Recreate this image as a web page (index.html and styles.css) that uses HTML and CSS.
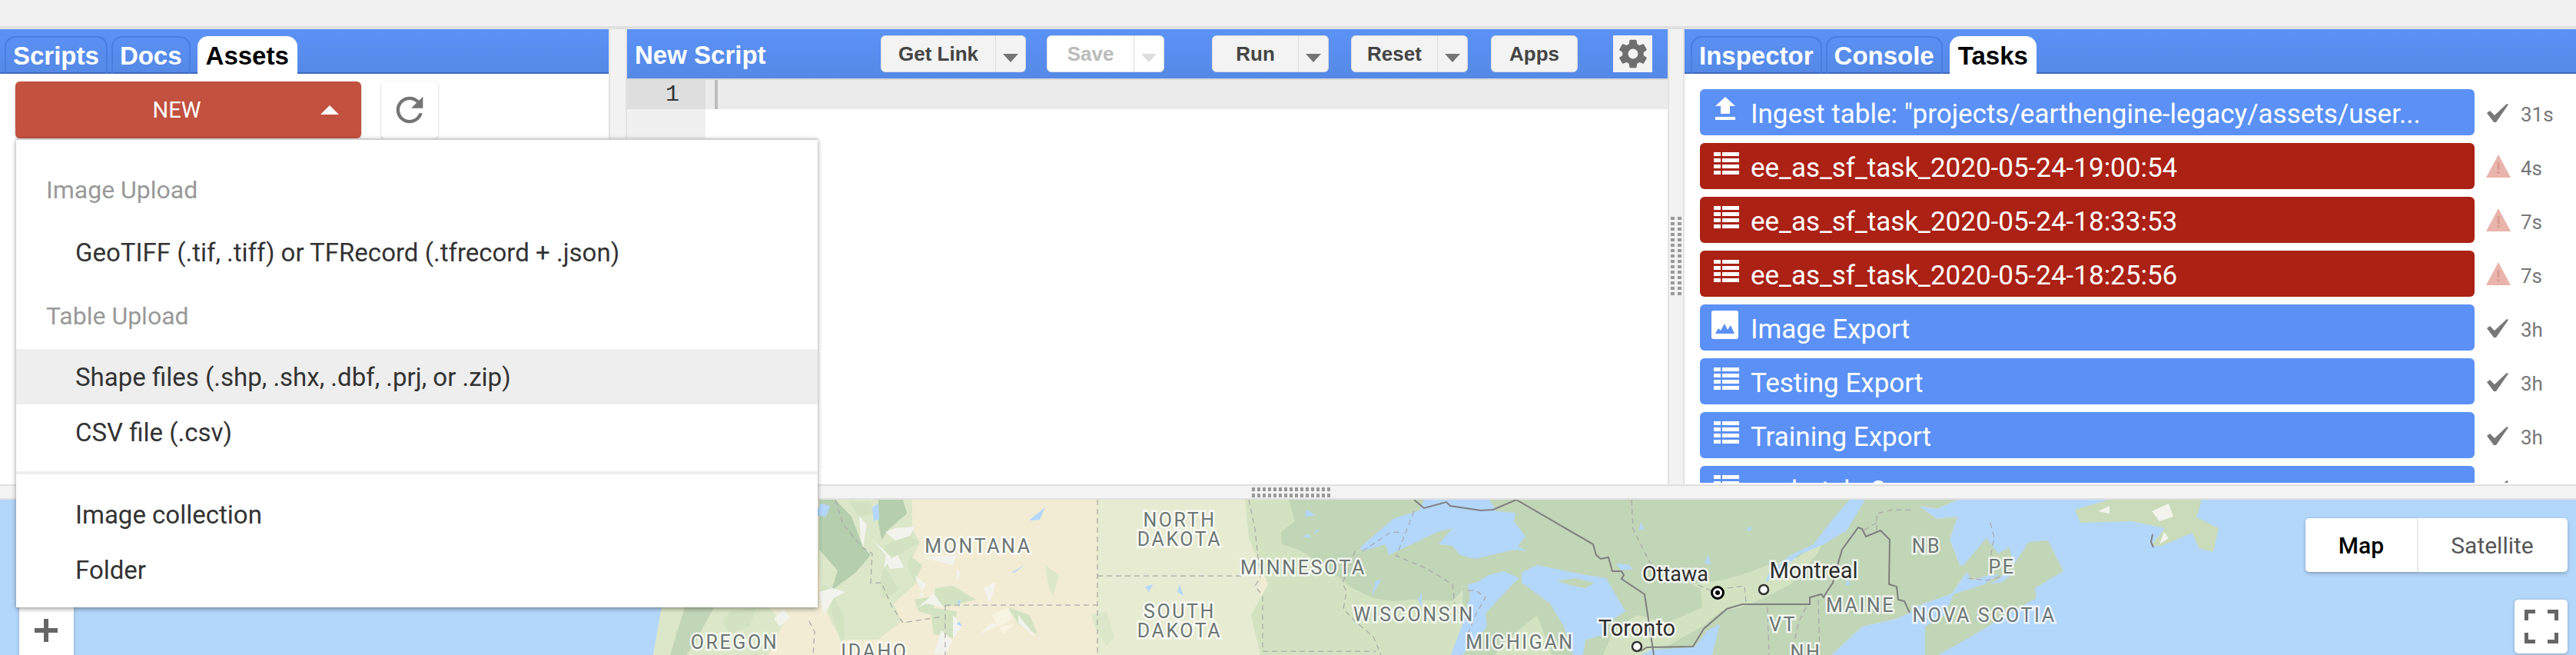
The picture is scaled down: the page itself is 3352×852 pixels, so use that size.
FILE: index.html
```html
<!DOCTYPE html>
<html lang="en">
<head>
<meta charset="utf-8">
<title>Earth Engine Code Editor</title>
<link rel="stylesheet" href="styles.css">
</head>
<body>
<svg class="defs" width="0" height="0" aria-hidden="true">
  <symbol id="i-table" viewBox="0 0 33 29"><path d="M0 0h9v5H0zM11 0h22v5H11zM0 8h9v5H0zM11 8h22v5H11zM0 16h9v5H0zM11 16h22v5H11zM0 24h9v5H0zM11 24h22v5H11z"/></symbol>
  <symbol id="i-upload" viewBox="0 0 26 31"><path d="M13 0 26 12H19V22H7V12H0zM0 26H26V30H0z"/></symbol>
  <symbol id="i-image" viewBox="0 0 35 37"><path fill-rule="evenodd" d="M3 0H32a3 3 0 0 1 3 3V34a3 3 0 0 1-3 3H3a3 3 0 0 1-3-3V3a3 3 0 0 1 3-3zM5 30H30L25 19 21 25 17 17 12 26 9 23z"/></symbol>
  <symbol id="i-check" viewBox="0 0 28 24"><path d="M0 12 4 9 10 15 26 0 28 1 12 24H9z"/></symbol>
  <symbol id="i-warn" viewBox="0 0 32 30"><path d="M16 0 32 30H0z"/><path class="warn-mark" d="M14.5 10h3v10h-3zM14.5 22h3v3h-3z"/></symbol>
</svg>

<div class="topbar"></div>

<main class="panels">
  <section class="panel left">
    <div class="tabbar">
      <span class="tab">Scripts</span>
      <span class="tab">Docs</span>
      <span class="tab active">Assets</span>
    </div>
    <div class="asset-tools">
      <div class="new-btn"><span class="new-label">NEW</span><span class="tri-up"></span></div>
      <div class="refresh">
        <svg viewBox="0 0 24 24" width="52" height="52"><path d="M17.65 6.35C16.2 4.9 14.21 4 12 4c-4.42 0-7.99 3.58-7.99 8s3.57 8 7.99 8c3.73 0 6.84-2.55 7.73-6h-2.08c-.82 2.33-3.04 4-5.65 4-3.31 0-6-2.69-6-6s2.69-6 6-6c1.66 0 3.14.69 4.22 1.78L13 11h7V4l-2.35 2.35z"/></svg>
      </div>
    </div>
  </section>

  <div class="gutter"></div>

  <section class="panel middle">
    <div class="toolbar">
      <span class="title">New Script</span>
      <div class="group"><span class="btn w-getlink">Get Link</span><span class="drop"></span></div>
      <div class="group gap-save disabled"><span class="btn w-save">Save</span><span class="drop"></span></div>
      <div class="group gap-run"><span class="btn w-run">Run</span><span class="drop"></span></div>
      <div class="group gap-reset"><span class="btn w-run">Reset</span><span class="drop"></span></div>
      <div class="group gap-apps"><span class="btn solo w-run">Apps</span></div>
      <div class="gear">
        <svg viewBox="0 0 24 24" width="44" height="44"><path d="M19.43 12.98c.04-.32.07-.64.07-.98s-.03-.66-.07-.98l2.11-1.65c.19-.15.24-.42.12-.64l-2-3.46c-.12-.22-.39-.3-.61-.22l-2.49 1c-.52-.4-1.08-.73-1.69-.98l-.38-2.65C14.46 2.18 14.25 2 14 2h-4c-.25 0-.46.18-.49.42l-.38 2.65c-.61.25-1.17.59-1.69.98l-2.49-1c-.23-.09-.49 0-.61.22l-2 3.46c-.13.22-.07.49.12.64l2.11 1.65c-.04.32-.07.65-.07.98s.03.66.07.98l-2.11 1.65c-.19.15-.24.42-.12.64l2 3.46c.12.22.39.3.61.22l2.49-1c.52.4 1.08.73 1.69.98l.38 2.65c.03.24.24.42.49.42h4c.25 0 .46-.18.49-.42l.38-2.65c.61-.25 1.17-.59 1.69-.98l2.49 1c.23.09.49 0 .61-.22l2-3.46c.12-.22.07-.49-.12-.64l-2.11-1.65zM12 15.5c-1.93 0-3.5-1.57-3.5-3.5s1.57-3.5 3.5-3.5 3.5 1.57 3.5 3.5-1.57 3.5-3.5 3.5z"/></svg>
      </div>
    </div>
    <div class="editor">
      <div class="line-row"><span class="line-no">1</span><span class="cursor"></span></div>
      <div class="editor-rest"><span class="gutter-fill"></span></div>
    </div>
  </section>

  <div class="gutter v-grip"><span class="grip-v"></span></div>

  <section class="panel right">
    <div class="tabbar">
      <span class="tab">Inspector</span>
      <span class="tab">Console</span>
      <span class="tab active">Tasks</span>
    </div>
    <div class="tasks">
      <div class="task"><div class="task-bar blue"><svg class="ic ic-upload"><use href="#i-upload"/></svg><span class="task-name">Ingest table: "projects/earthengine-legacy/assets/user...</span></div><div class="status"><svg class="st-check"><use href="#i-check"/></svg><span class="time">31s</span></div></div>
      <div class="task"><div class="task-bar red"><svg class="ic ic-table"><use href="#i-table"/></svg><span class="task-name">ee_as_sf_task_2020-05-24-19:00:54</span></div><div class="status"><svg class="st-warn"><use href="#i-warn"/></svg><span class="time">4s</span></div></div>
      <div class="task"><div class="task-bar red"><svg class="ic ic-table"><use href="#i-table"/></svg><span class="task-name">ee_as_sf_task_2020-05-24-18:33:53</span></div><div class="status"><svg class="st-warn"><use href="#i-warn"/></svg><span class="time">7s</span></div></div>
      <div class="task"><div class="task-bar red"><svg class="ic ic-table"><use href="#i-table"/></svg><span class="task-name">ee_as_sf_task_2020-05-24-18:25:56</span></div><div class="status"><svg class="st-warn"><use href="#i-warn"/></svg><span class="time">7s</span></div></div>
      <div class="task"><div class="task-bar blue"><svg class="ic ic-image"><use href="#i-image"/></svg><span class="task-name">Image Export</span></div><div class="status"><svg class="st-check"><use href="#i-check"/></svg><span class="time">3h</span></div></div>
      <div class="task"><div class="task-bar blue"><svg class="ic ic-table"><use href="#i-table"/></svg><span class="task-name">Testing Export</span></div><div class="status"><svg class="st-check"><use href="#i-check"/></svg><span class="time">3h</span></div></div>
      <div class="task"><div class="task-bar blue"><svg class="ic ic-table"><use href="#i-table"/></svg><span class="task-name">Training Export</span></div><div class="status"><svg class="st-check"><use href="#i-check"/></svg><span class="time">3h</span></div></div>
      <div class="task"><div class="task-bar blue"><svg class="ic ic-table"><use href="#i-table"/></svg><span class="task-name">ee_batch_2</span></div><div class="status"><svg class="st-check"><use href="#i-check"/></svg><span class="time">3h</span></div></div>
    </div>
  </section>
</main>

<div class="splitter"><span class="grip-h"></span></div>

<section class="map">
  <svg class="map-art" viewBox="0 650 3352 202" width="3352" height="202" aria-label="Map of the northern United States and south-eastern Canada">
    <!-- land base -->
    <path class="tan" d="M861 790 850 852H2383L2423 815 2467 805 2485 797 2490 790 2540 772 2563 738 2550 735 2537 702 2547 672 2520 675 2497 658 2520 662 2547 650H850Z"/>
    <path class="pale" d="M1428 650H1640V852H1428Z"/>
    <path class="mid" d="M1620 650H1690L1900 760 1920 852H1640L1628 800 1650 760 1625 700Z"/>
    <path class="dark" d="M1677 650 1685 678 1667 692 1668 708 1690 715 1707 725 1747 755 1760 765 1787 778 1813 782 1837 780 1890 782 1903 768 1905 852H2383L2423 815 2467 805 2485 797 2490 790 2540 772 2563 738 2550 735 2537 702 2547 672 2520 675 2497 658 2520 662 2547 650Z"/>
    <!-- Pacific coast ranges -->
    <path class="light" d="M861 790H1000L1020 810 1000 852H850Z"/>
    <path class="dark" d="M891 790H929L918 810 905 835 893 852H872Z"/>
    <path class="mid" d="M950 795 985 790 975 815 950 825 940 810Z"/>
    <path class="white" d="M1007 805 1020 792 1028 803 1015 815Z"/>
    <!-- southern Ontario and St Lawrence valley -->
    <path class="mid" d="M2086 852 2100 820 2130 800 2170 810 2215 790 2213 765 2200 760 2240 755 2275 745 2300 735 2340 725 2375 700 2365 720 2330 760 2295 778 2265 790 2240 795 2215 815 2170 840 2135 852Z"/>
    <path class="mid" d="M1945 852 1970 825 2000 800 2020 852Z"/>
    <!-- Rocky Mountains -->
    <path class="light" d="M1087 650H1187V688L1197 705 1183 735 1193 758 1177 772 1163 785 1173 808 1143 832 1097 832 1083 812 1070 778 1066 745V650Z"/>
    <path class="mid" d="M1105 653 1133 652 1137 668 1117 672ZM1151 710 1180 695 1197 705 1165 725 1155 740ZM1183 722 1200 735 1190 758 1182 740ZM1150 735 1170 768 1150 778 1145 760ZM1217 765 1240 762 1270 780 1230 790 1215 782ZM1210 790 1245 795 1240 830 1215 825ZM1312 790 1340 800 1350 825 1325 812ZM1190 780 1220 775 1212 800 1195 795Z"/>
    <path class="forest" d="M1066 650H1087L1108 672 1123 712 1133 722 1113 745 1082 768 1090 742 1066 715ZM1143 650H1175L1180 668 1157 688 1147 702 1143 680Z"/>
    <path class="mid" d="M1094 835 1080 790 1066 770 1072 760 1083 770 1097 800 1100 830Z"/>
    <path class="white" d="M1152 692 1165 687 1190 685 1184 697 1165 703ZM1118 672 1128 682 1123 712 1120 700ZM1133 700 1160 725 1150 740 1153 722ZM1153 730 1168 722 1176 738 1158 740ZM1066 770 1083 765 1100 770 1085 778 1072 800ZM1200 725 1245 722 1240 735ZM1245 740 1250 745 1245 755ZM1190 748 1205 760 1195 778 1202 775ZM1195 790 1215 772 1228 790 1205 785ZM1280 765 1296 757 1288 785ZM1325 800 1345 825 1348 830 1325 810ZM1240 800 1252 815 1240 830ZM1225 820 1240 833 1230 852 1215 850ZM1290 810 1300 813 1275 825Z"/>
    <path class="cream" d="M1290 800 1312 790 1317 805 1300 815ZM1300 815 1320 812 1305 825Z"/>
    <path class="light" d="M1420 800 1440 795 1450 830 1440 840 1425 815ZM1360 735 1378 748 1370 775 1365 765Z"/>
    <!-- lakes -->
    <path class="water" d="M1770 712 1813 675 1847 664 1853 650H1938L1947 665 1972 667 1970 678 1985 698 1975 710 1987 717 1970 715 1920 727 1900 722 1890 710 1872 708 1890 687 1870 692 1837 708 1807 722 1803 708 1773 717Z"/>
    <path class="water" d="M1957 743 1977 752 1970 758 1933 798 1935 815 1903 852H1888L1903 812 1913 775 1910 760 1923 757 1937 748Z"/>
    <path class="water" d="M1980 745 2000 735 2063 748 2090 752 2100 770 2115 795 2095 808 2080 805 2090 825 2063 832 2060 852H2047L2035 815 2017 785 1980 758Z"/>
    <path class="dark" d="M2025 755 2050 752 2075 758 2063 765 2045 762Z"/>
    <path class="water" d="M2135 852 2150 845 2205 842 2222 820 2238 812 2228 852Z"/>
    <path class="water" d="M2407 650H2427L2403 690 2373 708 2340 722 2320 740 2297 758 2302 745 2330 722 2360 708 2385 675Z"/>
    <path class="water" d="M2103 733 2120 735 2125 740 2110 742ZM2223 721 2226 735 2218 732ZM2135 680 2140 688 2132 690ZM2272 690 2278 684 2279 690ZM1060 670 1068 655 1080 658 1075 672ZM1135 660 1143 655 1144 675 1137 678ZM1340 676 1360 660 1353 676 1342 677ZM1316 745 1333 735 1320 745ZM1250 780 1248 790 1246 782ZM1248 808 1252 815 1245 812ZM1490 763 1500 760 1495 770ZM1535 760 1540 775 1532 770ZM1700 663 1712 670 1698 672ZM1702 695 1707 700 1695 698ZM1712 690 1718 688 1710 695ZM1790 755 1797 755 1785 775ZM1845 780 1850 770 1850 790ZM2403 752 2408 760 2402 762Z"/>
    <path class="pale-land" d="M2700 663 2744 650H2865L2858 673 2887 687 2880 718 2861 713 2853 693 2813 710 2799 710 2817 687 2773 678 2707 680Z"/>
    <path class="white" d="M2730 665 2745 658 2745 668ZM2800 665 2822 655 2828 672 2810 678ZM2816 692 2822 700 2810 708Z"/>
    <path class="land-ns" d="M2505 852 2505 815 2530 800 2542 773 2582 760 2620 735 2640 705 2665 703 2685 743 2648 765 2650 778 2610 800 2570 825 2522 852Z"/>
    <path class="land-ns" d="M2555 735 2585 700 2600 720 2615 712 2622 745 2590 748 2565 755Z"/>
    <path class="water" d="M2590 760 2612 745 2620 745 2605 757Z"/>
    <!-- state and province lines -->
    <g class="state">
      <path d="M1428 650V852M1428 749H1615M1230 787H1428M1230 787V852"/>
      <path d="M1087 650 1097 682 1122 712 1135 720 1133 758 1147 758 1160 788 1175 810 1227 802"/>
      <path d="M1053 808 1060 822 1058 852"/>
      <path d="M1625 650 1633 688 1640 752 1633 762 1643 775 1643 847H1790"/>
      <path d="M1763 717 1757 735 1747 758 1752 770 1748 792 1763 808 1787 828 1797 852"/>
      <path d="M1773 717 1810 692 1826 693M1840 665 1817 723 1857 740 1890 760 1893 785"/>
      <path d="M1910 768 1920 768 1933 777 1920 800 1910 825"/>
      <path d="M2123 650 2125 688 2147 732 2203 758 2226 768M2248 765 2270 762 2272 785"/>
      <path d="M2300 790 2302 852M2366 780 2368 852M2350 790 2340 810 2332 852"/>
      <path d="M2442 690 2442 668 2463 663 2490 663M2442 680 2425 690"/>
      <path d="M2590 680 2595 700 2590 725M2560 752 2585 755 2605 750"/>
    </g>
    <path class="border" d="M1840 650 1853 661 1882 653 1887 658 1927 664 1943 663 1973 650 2073 708 2077 722 2083 727 2093 725 2098 743 2110 743 2113 748 2110 753 2140 773 2151 845 2152 852M2135 847 2143 842 2203 841 2217 818 2247 792 2267 786H2355V777L2370 773 2373 777 2377 770 2385 758 2392 732 2397 715 2418 686 2423 688 2428 698 2447 690 2459 702 2458 760 2468 763 2470 780 2478 782 2485 797"/>
    <path class="border" d="M2801 695 2799 705 2802 712"/>
    <!-- labels -->
    <g class="labels">
      <text x="1273" y="719" class="region">MONTANA</text>
      <text x="1535" y="685" class="region">NORTH</text>
      <text x="1535" y="710" class="region">DAKOTA</text>
      <text x="1535" y="804" class="region">SOUTH</text>
      <text x="1535" y="829" class="region">DAKOTA</text>
      <text x="1696" y="747" class="region">MINNESOTA</text>
      <text x="1840" y="808" class="region">WISCONSIN</text>
      <text x="1978" y="844" class="region">MICHIGAN</text>
      <text x="956" y="844" class="region">OREGON</text>
      <text x="1138" y="856" class="region">IDAHO</text>
      <text x="2421" y="796" class="region">MAINE</text>
      <text x="2320" y="821" class="region">VT</text>
      <text x="2350" y="857" class="region">NH</text>
      <text x="2507" y="719" class="region">NB</text>
      <text x="2605" y="746" class="region">PE</text>
      <text x="2582" y="809" class="region">NOVA SCOTIA</text>
      <text x="2180" y="756" class="city city-narrow">Ottawa</text>
      <text x="2130" y="827" class="city">Toronto</text>
      <text x="2360" y="752" class="city">Montreal</text>
    </g>
    <circle class="cap-ring" cx="2235" cy="771" r="7.5"/>
    <circle class="cap-dot" cx="2235" cy="771" r="3"/>
    <circle class="town" cx="2295" cy="767" r="6"/>
    <circle class="town" cx="2130" cy="841" r="6"/>
  </svg>

  <div class="map-types">
    <span class="map-type on">Map</span>
    <span class="map-type">Satellite</span>
  </div>
  <div class="fullscreen">
    <svg viewBox="0 0 44 44" width="44" height="44"><path d="M0 0H14V5H5V14H0ZM30 0H44V14H39V5H30ZM0 30H5V39H14V44H0ZM39 30H44V44H30V39H39Z"/></svg>
  </div>
  <div class="zoom-ctl"><span class="plus"></span></div>
</section>

<div class="menu">
  <div class="menu-head first">Image Upload</div>
  <div class="menu-item">GeoTIFF (.tif, .tiff) or TFRecord (.tfrecord + .json)</div>
  <div class="menu-head second">Table Upload</div>
  <div class="menu-item hover">Shape files (.shp, .shx, .dbf, .prj, or .zip)</div>
  <div class="menu-item">CSV file (.csv)</div>
  <div class="menu-sep"></div>
  <div class="menu-item">Image collection</div>
  <div class="menu-item">Folder</div>
</div>
</body>
</html>
```

FILE: styles.css
```css
* { box-sizing: border-box; }
html, body { margin: 0; height: 852px; overflow: hidden; }
body {
  position: relative;
  display: flex;
  flex-direction: column;
  width: 3352px;
  background: #f2f2f2;
  font-family: Roboto, "Liberation Sans", sans-serif;
  color: #333;
}
.defs { position: absolute; }

.topbar {
  height: 38px;
  flex: none;
  background: #f1f1f1;
  border-bottom: 4px solid #e0e0e0;
}

.panels { display: flex; height: 592px; flex: none; }
.panel { background: #fff; overflow: hidden; flex: none; }
.left { width: 792px; }
.middle { width: 1354px; }
.right { flex: 1; }
.gutter {
  flex: none;
  width: 24px;
  background: #f2f2f2;
  border-left: 2px solid #e2e2e2;
  border-right: 2px solid #e2e2e2;
}
.v-grip { width: 22px; position: relative; }
.grip-v {
  position: absolute;
  left: 2px;
  top: 244px;
  width: 14px;
  height: 102px;
  background:
    repeating-linear-gradient(0deg, #999 0 4px, transparent 4px 7px);
  -webkit-mask: repeating-linear-gradient(90deg, #000 0 5px, transparent 5px 9px);
  mask: repeating-linear-gradient(90deg, #000 0 5px, transparent 5px 9px);
}

.tabbar {
  height: 58px;
  display: flex;
  align-items: flex-end;
  padding-left: 6px;
  background: linear-gradient(#5b92f7, #5589e6);
  border-bottom: 2px solid #3d68bd;
}
.right .tabbar { padding-left: 8px; }
.tab {
  height: 49px;
  margin-bottom: -2px;
  margin-right: 5px;
  padding: 0 9px;
  display: flex;
  align-items: center;
  border: 2px solid #4a7de0;
  border-bottom: 0;
  border-radius: 14px 14px 0 0;
  font: bold 33px "Liberation Sans", Arial, sans-serif;
  color: #fff;
}
.tab.active {
  background: #fff;
  color: #000;
  border-color: #fff;
  margin-left: 4px;
}

.asset-tools { display: flex; padding: 10px 0 0 20px; gap: 26px; }
.new-btn {
  position: relative;
  width: 450px;
  height: 74px;
  background: #c25140;
  border-radius: 6px;
  display: flex;
  align-items: center;
  justify-content: center;
  box-shadow: 0 1px 3px rgba(0,0,0,.25);
}
.new-label { color: #fff; font-size: 29px; margin-right: 30px; }
.tri-up {
  position: absolute;
  left: 397px;
  top: 31px;
  width: 0;
  height: 0;
  border-left: 12.5px solid transparent;
  border-right: 12.5px solid transparent;
  border-bottom: 12px solid #fff;
}
.refresh {
  width: 74px;
  height: 74px;
  background: #fff;
  border-radius: 5px;
  box-shadow: 0 1px 3px rgba(0,0,0,.25);
  display: flex;
  align-items: center;
  justify-content: center;
}
.refresh svg { fill: #757575; }

.toolbar {
  height: 66px;
  display: flex;
  align-items: flex-start;
  padding-top: 8px;
  background: linear-gradient(#5b92f7, #5589e6);
  border-bottom: 2px solid #d9d9d9;
}
.title {
  width: 330px;
  padding: 7px 0 0 10px;
  font: bold 33px "Liberation Sans", Arial, sans-serif;
  color: #fff;
}
.group { display: flex; height: 48px; }
.gap-save { margin-left: 27px; }
.gap-run { margin-left: 62px; }
.gap-reset { margin-left: 29px; }
.gap-apps { margin-left: 30px; }
.btn {
  display: flex;
  align-items: center;
  justify-content: center;
  background: #f3f3f3;
  border: 1px solid #dcdcdc;
  border-radius: 6px 0 0 6px;
  font: bold 26px "Liberation Sans", Arial, sans-serif;
  color: #444;
}
.btn.solo { border-radius: 6px; }
.w-getlink { width: 150px; }
.w-save { width: 114px; }
.w-run { width: 113px; }
.drop {
  position: relative;
  width: 39px;
  background: #f3f3f3;
  border: 1px solid #dcdcdc;
  border-left: 0;
  border-radius: 0 6px 6px 0;
}
.drop::after {
  content: "";
  position: absolute;
  left: 9px;
  top: 23px;
  border-left: 10px solid transparent;
  border-right: 10px solid transparent;
  border-top: 11px solid #757575;
}
.disabled .btn, .disabled .drop { background: #fff; color: #bbb; }
.disabled .drop::after { border-top-color: #ddd; }
.gear {
  margin-left: 46px;
  width: 51px;
  height: 48px;
  background: #f3f3f3;
  display: flex;
  align-items: center;
  justify-content: center;
}
.gear svg { fill: #6f6f6f; }

.editor { background: #fff; height: 526px; display: flex; flex-direction: column; }
.line-row { height: 38px; display: flex; background: #ebebeb; flex: none; }
.line-no {
  width: 102px;
  background: #dedede;
  padding-left: 50px;
  font: 30px/38px "Liberation Mono", monospace;
  color: #333;
}
.cursor { width: 4px; height: 38px; margin-left: 12px; background: #bdbdbd; }
.editor-rest { flex: 1; }
.gutter-fill { display: block; width: 102px; height: 100%; background: #f0f0f0; }

.tasks { padding: 20px 0 0 20px; height: 532px; overflow: hidden; }
.task { display: flex; align-items: center; height: 60px; margin-bottom: 10px; }
.task-bar {
  position: relative;
  width: 1008px;
  height: 60px;
  flex: none;
  border-radius: 6px;
  display: flex;
  align-items: center;
  padding-left: 66px;
  color: #fff;
}
.blue { background: #5b91f6; }
.red { background: #ab2114; }
.task-name { font-size: 35px; white-space: nowrap; position: relative; top: 2px; }
.ic { position: absolute; fill: #fff; }
.ic-table { left: 18px; top: 12px; width: 33px; height: 29px; }
.ic-upload { left: 20px; top: 10px; width: 26px; height: 31px; }
.ic-image { left: 15px; top: 8px; width: 35px; height: 37px; }
.status { display: flex; align-items: center; position: relative; width: 120px; height: 60px; }
.st-check { position: absolute; left: 16px; top: 19px; width: 28px; height: 24px; fill: #777; }
.st-warn { position: absolute; left: 15px; top: 15px; width: 32px; height: 30px; fill: #e9b4ab; }
.warn-mark { fill: #d99a90; }
.time { position: absolute; left: 60px; top: 18px; font-size: 26px; color: #777; }

.splitter {
  position: relative;
  height: 20px;
  flex: none;
  background: #f3f3f3;
  border-top: 2px solid #e0e0e0;
  border-bottom: 2px solid #e0e0e0;
}
.grip-h {
  position: absolute;
  left: 1629px;
  top: 2px;
  width: 102px;
  height: 13px;
  background: repeating-linear-gradient(90deg, #999 0 4px, transparent 4px 7px);
  -webkit-mask: repeating-linear-gradient(0deg, #000 0 5px, transparent 5px 8px);
  mask: repeating-linear-gradient(0deg, #000 0 5px, transparent 5px 8px);
}

.map { position: relative; height: 202px; flex: none; overflow: hidden; background: #b3d7fb; }
.map-art { display: block; }
.tan { fill: #f2ecd4; }
.pale { fill: #e7ebd2; }
.mid { fill: #d3e3c2; }
.dark { fill: #c1d5b7; }
.light { fill: #dbe7c8; }
.forest { fill: #b4ceae; }
.white { fill: #f3f3ee; }
.cream { fill: #f8f4e2; }
.water { fill: #b3d7fb; }
.pale-land { fill: #c9dbb8; }
.land-ns { fill: #c1d5b7; }
.state path { fill: none; stroke: #aaa9aa; stroke-width: 1.25; stroke-dasharray: 7 5; }
.border { fill: none; stroke: #7f7f7f; stroke-width: 2; }
.region {
  font: 25px Roboto, sans-serif;
  letter-spacing: 2.6px;
  fill: #6c7675;
  stroke: #fff;
  stroke-opacity: .75;
  stroke-width: 5px;
  paint-order: stroke;
  text-anchor: middle;
}
.city {
  font: 29px Roboto, sans-serif;
  fill: #2e2e2e;
  stroke: #fff;
  stroke-opacity: .8;
  stroke-width: 5px;
  paint-order: stroke;
  text-anchor: middle;
}
.city-narrow { font-size: 27px; }
.cap-ring { fill: #fff; stroke: #000; stroke-width: 3; }
.cap-dot { fill: #000; }
.town { fill: #fff; stroke: #333; stroke-width: 2.5; }

.map-types {
  position: absolute;
  left: 3000px;
  top: 24px;
  display: flex;
  width: 341px;
  height: 70px;
  background: #fff;
  border-radius: 5px;
  box-shadow: 0 2px 5px rgba(0,0,0,.25);
}
.map-type {
  display: flex;
  align-items: center;
  justify-content: center;
  flex: 1;
  font-size: 30px;
  color: #565656;
}
.map-type.on {
  flex: none;
  width: 145px;
  font-weight: 500;
  color: #000;
  box-shadow: 1px 0 2px rgba(0,0,0,.15);
}
.fullscreen {
  position: absolute;
  left: 3272px;
  top: 130px;
  width: 69px;
  height: 70px;
  background: #fff;
  border-radius: 5px;
  box-shadow: 0 1px 4px rgba(0,0,0,.25);
  display: flex;
  align-items: center;
  justify-content: center;
}
.fullscreen svg { fill: #666; }
.zoom-ctl {
  position: absolute;
  left: 25px;
  top: 130px;
  width: 71px;
  height: 80px;
  background: #fff;
  box-shadow: 0 1px 4px rgba(0,0,0,.25);
}
.plus {
  position: absolute;
  left: 20px;
  top: 25px;
  width: 30px;
  height: 30px;
  background:
    linear-gradient(#666, #666) center / 30px 6px no-repeat,
    linear-gradient(#666, #666) center / 6px 30px no-repeat;
}

.menu {
  position: absolute;
  left: 21px;
  top: 180px;
  width: 1043px;
  height: 610px;
  padding: 31px 0 13px;
  background: #fff;
  border-top: 2px solid #cfcfcf;
  box-shadow: 0 2px 6px rgba(0,0,0,.4);
}
.menu-head, .menu-item {
  height: 72px;
  display: flex;
  align-items: center;
  white-space: nowrap;
}
.menu-head { padding-left: 39px; color: #999; font-size: 32px; }
.menu-head.first { margin-bottom: 9px; margin-top: -2px; }
.menu-head.second { margin-top: 11px; margin-bottom: 7px; }
.menu-item { padding-left: 77px; color: #333; font-size: 33px; }
.menu-item.hover { background: #eee; }
.menu-sep { height: 4px; margin: 15px 0 16px; background: #eee; }
```
